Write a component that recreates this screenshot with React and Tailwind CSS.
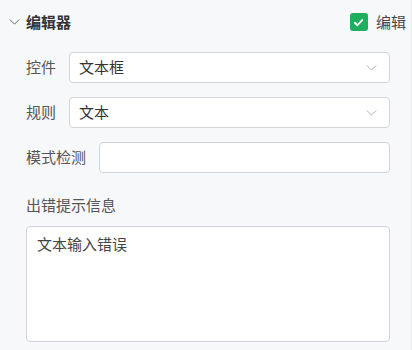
import React from "react";

const font = { fontFamily: '"Noto Sans CJK SC", "Noto Sans", sans-serif' };

function Chevron({ className }) {
  return (
    <svg viewBox="0 0 12 7" className={className} fill="none" stroke="currentColor" strokeWidth="1.1">
      <path d="M0.5 0.5 L6 6 L11.5 0.5" />
    </svg>
  );
}

function Select({ value }) {
  return (
    <div className="flex-1 h-[31px] bg-white border border-[#d2d4d8] rounded-[4px] flex items-center justify-between pl-[9px] pr-[12px]">
      <span className="text-[15px] text-[#333]">{value}</span>
      <Chevron className="w-[11px] h-[6px] text-[#a8abb0]" />
    </div>
  );
}

export default function App() {
  return (
    <div style={font} className="w-[412px] h-[350px] bg-[#f7f8fa] border-r border-[#e8eaee] overflow-hidden">
      <div className="flex items-center justify-between pl-[9px] pr-[5px] pt-[12px] h-[32px]">
        <div className="flex items-center gap-[6px]">
          <Chevron className="w-[11px] h-[6px] text-[#666]" />
          <span className="text-[15px] font-bold text-[#333]">编辑器</span>
        </div>
        <div className="flex items-center gap-[8px]">
          <div className="w-[18px] h-[18px] rounded-[3px] bg-[#1fae5d] flex items-center justify-center">
            <svg viewBox="0 0 12 12" className="w-[11px] h-[11px]" fill="none" stroke="white" strokeWidth="2" strokeLinecap="round" strokeLinejoin="round">
              <path d="M2 6.3 L4.8 9 L10 3.3" />
            </svg>
          </div>
          <span className="text-[15px] text-[#444]">编辑</span>
        </div>
      </div>
      <div className="pl-[26px] pr-[21px] pt-[20px] flex flex-col">
        <div className="flex items-center">
          <span className="w-[43px] text-[15px] text-[#555]">控件</span>
          <Select value="文本框" />
        </div>
        <div className="flex items-center mt-[14px]">
          <span className="w-[43px] text-[15px] text-[#555]">规则</span>
          <Select value="文本" />
        </div>
        <div className="flex items-center mt-[14px]">
          <span className="w-[73px] text-[15px] text-[#555]">模式检测</span>
          <div className="flex-1 h-[31px] bg-white border border-[#d2d4d8] rounded-[4px]" />
        </div>
        <div className="mt-[20px] h-[24px] flex items-center text-[15px] text-[#555]">出错提示信息</div>
        <div className="mt-[9px] h-[116px] bg-white border border-[#d2d4d8] rounded-[4px] px-[10px] pt-[6px] text-[15px] text-[#444]">
          文本输入错误
        </div>
      </div>
    </div>
  );
}
